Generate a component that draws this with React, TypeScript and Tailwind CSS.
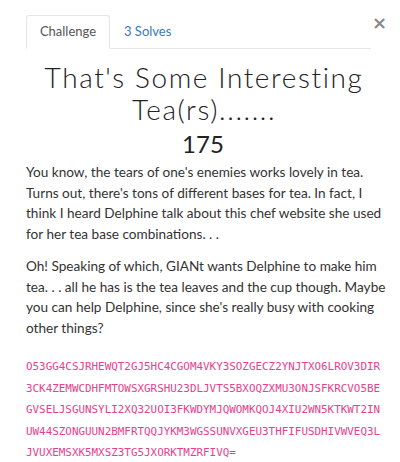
export default function App() {
  const code = [
    "O53GG4CSJRHEWQT2GJ5HC4CGOM4VKY3SOZGECZ2YNJTXO6LROV3DIR",
    "3CK4ZEMWCDHFMTOWSXGRSHU23DLJVTS5BXOQZXMU3ONJSFKRCVO5BE",
    "GVSELJSGUNSYLI2XQ32UOI3FKWDYMJQWOMKQOJ4XIU2WN5KTKWT2IN",
    "UW44SZONGUUN2BMFRTQQJYKM3WGSSUNVXGEU3THFIFUSDHIVWVEQ3L",
    "JVUXEMSXK5MXSZ3TG5JXORKTMZRFIVQ=",
  ];
  return (
    <div className="relative w-[400px] h-[462px] bg-white overflow-hidden" style={{ fontFamily: "Lato, 'Noto Sans', sans-serif" }}>
      <button className="absolute left-[372px] top-[14px] text-[18px] leading-none text-[#8a8a8a] font-bold" style={{ fontFamily: "'DejaVu Sans', sans-serif" }}>×</button>
      <div className="pl-[26px] pt-[15px]">
        <div className="flex w-[345px] border-b border-[#e6e6e6] h-[34px]">
          <div className="w-[84px] h-[34px] border border-[#e6e6e6] border-b-white rounded-t-[3px] bg-white flex items-center justify-center text-[13px] text-[#555] -mb-px">Challenge</div>
          <div className="h-[33px] flex items-center pl-[14px] text-[13px] text-[#3c78b5]">3 Solves</div>
        </div>
        <div className="w-[364px]">
          <h1 className="text-center text-[28px] leading-[32px] font-light text-[#222] mt-[12px] tracking-[1.6px] pr-[8px]">That's Some Interesting Tea(rs).......</h1>
          <div className="text-center text-[24px] leading-[30px] text-[#222] mt-[4px] pr-[10px]">175</div>
          <div className="text-[13.6px] leading-[20.5px] text-[#333] mt-[3px]">
            <p>You know, the tears of one's enemies works lovely in tea. Turns out, there's tons of different bases for tea. In fact, I think I heard Delphine talk about this chef website she used for her tea base combinations. . .</p>
            <p className="mt-[12px]">Oh! Speaking of which, GIANt wants Delphine to make him tea. . . all he has is the tea leaves and the cup though. Maybe you can help Delphine, since she's really busy with cooking other things?</p>
          </div>
          <div className="mt-[18px] text-[10.9px] leading-[21.5px] text-[#e83e8c]" style={{ fontFamily: "'DejaVu Sans Mono', monospace" }}>
            {code.map((l) => (
              <div key={l}>{l}</div>
            ))}
          </div>
        </div>
      </div>
    </div>
  );
}
